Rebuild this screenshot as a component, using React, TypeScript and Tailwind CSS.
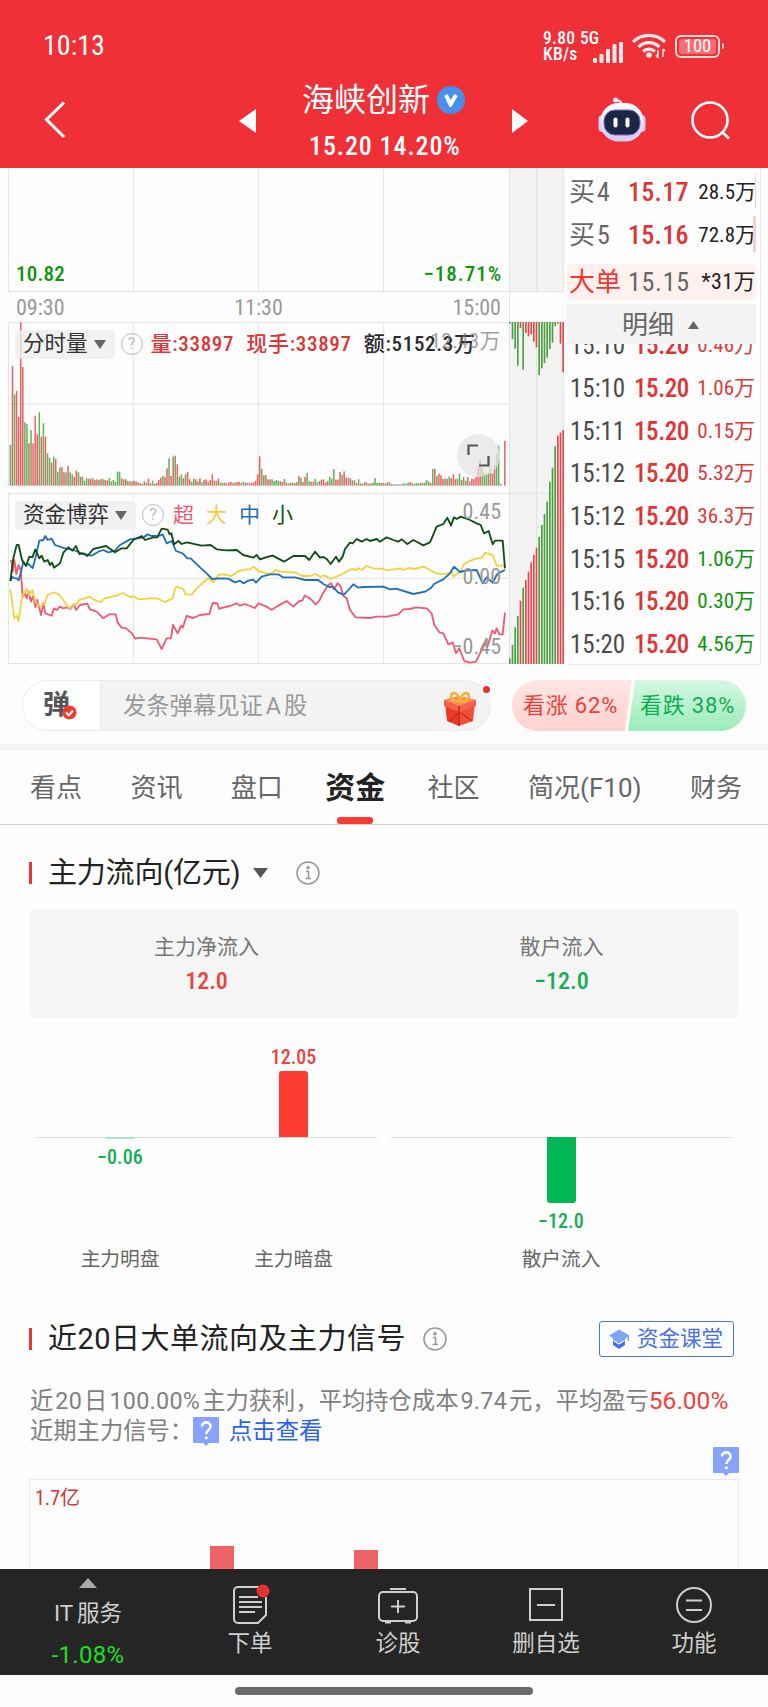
import type { ReactNode } from "react"

const RED = "#e5484a"
const GREEN = "#4aa340"

// minute volume, one entry per bar: height in 1/3 px, then r/g/n for the colour
const volume =
  "122g 359r 274g 284r 206r 490r 356r 190g 185g 127r 167g 127r 210r 154r 220g 147r 187g 147r 97g 84g 69r 87g 80r 42g 55g 55r 40r 40g 59r 40g 34g 26r 45r 40g 27r 27g 15g 22g 21r 21r 22g 17r 19r 17g 20r 19g 17r 15r 23g 13g 17g 12g 42g 42g 22r 19g 19r 14g 13r 13g 15r 13r 10g 7r 5g 13r 9g 21r 7g 15g 6r 8r 17r 24r 30g 26r 52r 82g 29r 87r 90g 64r 27g 34g 22r 34g 41r 19r 12g 21g 19r 13g 22r 10g 17r 19r 12g 17r 34r 15r 15g 22r 9g 9g 9r 7n 9r 11r 8g 9r 11r 12r 8n 12g 9r 9n 9n 9r 9r 15r 34r 88r 51g 31r 32g 19r 19r 19g 14g 17g 15g 13r 11r 20g 9r 7g 9r 9g 8r 11g 29r 24g 11r 26r 38g 14g 11r 12r 20g 11n 14g 18r 19r 9r 14r 27g 21g 50g 18r 18r 41r 33g 43r 24r 24n 22r 16g 16r 8g 19g 7r 6g 11r 9n 6g 7r 9g 23g 8g 9g 8g 8r 7g 10r 10r 5g 4r 4g 4n 4g 5n 7g 6n 9g 11r 7r 5g 8g 7g 9g 8g 9r 17g 13g 9r 50g 50r 29g 36r 31r 20r 22g 20r 27g 22r 34r 19r 21g 36g 17r 26g 15g 26r 13n 21r 20r 26r 57r 79r 52g 39g 35g 39r 57g 37r 62r 95g 120g 6n 0n 134r"
    .split(" ")
    .map((v) => ({ h: parseInt(v), c: v.slice(-1) }))

const chipTop =
  "5g 51g 80g 131g 18r 143g 33r 43r 37r 59r 76r 159g 139g 123g 107g 81g 62g 13g 5r 65r 151r".split(" ")
const chipBottom =
  "17g 57g 110g 144g 190r 229g 252r 277r 305r 327r 349r 381g 417g 450g 487g 547g 589g 653g 685r 694r 702r".split(" ")

const lines = [
  {
    color: "#ee5a72",
    points:
      "31,210 35,215 38,245 43,210 49,252 56,225 62,240 68,320 75,310 80,325 86,305 93,335 100,317 106,352 112,330 123,375 130,340 136,370 155,377 162,355 170,360 180,350 190,355 200,352 210,357 222,343 228,360 240,345 262,341 270,358 290,365 310,385 328,373 347,373 353,398 365,413 378,415 396,430 405,446 420,443 470,448 485,477 500,445 513,445 519,405 533,430 543,407 548,413 560,378 580,384 600,375 628,372 638,339 652,340 657,356 690,348 710,340 720,347 735,342 765,354 775,340 800,350 815,359 835,347 860,333 880,350 898,333 907,332 914,317 930,325 947,343 958,332 970,308 985,285 993,280 1002,298 1013,280 1021,287 1030,318 1040,325 1050,360 1067,382 1110,384 1130,380 1160,380 1195,373 1210,358 1230,357 1248,352 1280,355 1295,370 1303,405 1318,427 1330,430 1345,463 1358,457 1368,490 1378,475 1393,513 1410,518 1428,515 1440,490 1455,460 1462,470 1477,422 1485,430 1490,415 1498,433 1508,433 1515,368",
  },
  {
    color: "#f4d23f",
    points:
      "31,297 43,385 50,378 56,393 66,320 80,297 88,315 97,300 106,335 120,350 133,342 143,315 162,307 175,312 190,330 207,355 220,345 232,340 238,330 270,320 280,328 300,336 315,325 335,320 350,317 368,309 390,321 400,319 415,328 450,325 470,325 495,336 518,325 525,295 532,290 550,297 556,313 575,314 590,295 625,264 640,277 655,255 670,253 695,258 715,243 740,238 750,238 761,230 775,243 800,250 815,250 828,240 840,245 890,248 905,258 930,258 947,252 960,260 975,257 993,267 1020,255 1055,237 1070,240 1075,234 1085,240 1100,228 1120,235 1150,237 1162,241 1200,235 1210,240 1225,234 1242,237 1270,230 1290,240 1310,250 1335,253 1355,245 1360,260 1385,240 1392,222 1420,208 1445,203 1455,188 1478,195 1490,227 1513,227",
  },
  {
    color: "#2070b8",
    points:
      "31,273 37,260 43,265 50,265 56,271 62,250 70,215 78,225 85,222 98,234 106,205 118,152 130,150 136,138 143,150 155,146 165,165 195,175 210,177 228,183 250,192 275,197 295,185 310,180 325,187 345,182 360,165 390,148 410,145 430,143 443,133 455,138 480,137 488,133 500,160 515,153 528,183 548,190 562,205 572,205 600,232 620,250 636,267 655,265 685,266 705,277 720,272 730,280 745,272 760,269 768,278 785,260 810,253 835,253 848,262 885,262 915,270 955,270 970,282 988,291 998,290 1015,308 1032,314 1045,300 1060,283 1075,293 1090,291 1150,290 1170,298 1188,296 1240,312 1275,305 1292,295 1302,282 1330,268 1350,250 1362,230 1380,246 1400,241 1430,240 1448,280 1460,262 1478,278 1490,255 1500,247 1515,240",
  },
  {
    color: "#0f4d12",
    points:
      "31,273 40,205 50,165 56,165 66,210 78,228 88,200 97,202 106,178 118,205 125,197 133,215 143,210 150,225 156,218 162,233 180,220 190,188 205,172 217,182 228,168 238,192 250,190 262,198 280,177 300,172 318,168 345,187 365,175 380,175 400,150 425,138 435,150 460,142 472,142 485,116 503,119 509,133 514,130 522,163 535,153 545,162 560,157 605,167 632,165 650,178 680,181 710,180 730,195 760,203 770,195 780,208 805,200 818,197 852,215 880,198 915,198 928,210 945,185 960,203 970,201 980,207 992,222 1008,200 1017,215 1028,200 1035,177 1050,158 1058,160 1070,147 1085,155 1100,147 1110,153 1130,147 1140,155 1160,142 1180,150 1195,155 1205,148 1222,162 1240,150 1270,166 1290,157 1310,110 1330,102 1342,83 1353,107 1362,82 1370,87 1382,80 1410,90 1430,100 1442,105 1452,130 1466,123 1478,163 1485,152 1508,152 1515,235",
  },
]

const trades = [
  { time: "15:10", amount: "0.46万", up: true },
  { time: "15:10", amount: "1.06万", up: true },
  { time: "15:11", amount: "0.15万", up: true },
  { time: "15:12", amount: "5.32万", up: true },
  { time: "15:12", amount: "36.3万", up: true },
  { time: "15:15", amount: "1.06万", up: false },
  { time: "15:16", amount: "0.30万", up: false },
  { time: "15:20", amount: "4.56万", up: false },
]

const tabs = ["看点", "资讯", "盘口", "资金", "社区", "简况(F10)", "财务"]

const num = "font-['Roboto_Condensed','Roboto','Noto_Sans_CJK_SC',sans-serif]"

function StatusBar() {
  return (
    <div className="flex h-[74px] items-center pt-[18px] pl-[43px]">
      <span className={`${num} w-[500px] text-[28px] leading-none`}>10:13</span>
      <div className={`${num} flex w-[34px] flex-col text-[17.500px] leading-[16px] font-medium tracking-[0.3px]`}>
        <span>9.80</span>
        <span>KB/s</span>
      </div>
      <div className="relative ml-[3px] h-[38px] w-[46px]">
        <span className={`${num} absolute top-[3px] left-0 text-[17.500px] leading-[16px] font-medium`}>5G</span>
        <svg className="absolute top-[1px] left-[12px]" width="33" height="36" fill="#ffe9e9">
          <rect x="1" y="30" width="4" height="5" rx="1" />
          <rect x="7.500" y="26" width="4" height="9" rx="1" />
          <rect x="14" y="21" width="4" height="14" rx="1" />
          <rect x="20.500" y="16" width="4" height="19" rx="1" />
          <rect x="27" y="14" width="4" height="21" rx="1" />
        </svg>
      </div>
      <svg className="ml-[6px]" width="34" height="26" fill="none" stroke="#ffe9e9" strokeWidth="3.200">
        <path d="M1 9a22.500 22.500 0 0 1 32 0M6.500 14a15 15 0 0 1 21 0M11 18.500a9 9 0 0 1 12 0" />
        <circle cx="17" cy="22" r="1.800" fill="#ffe9e9" stroke="#ffe9e9" strokeWidth="2" />
        <path d="M26 17v8M31 16v8M24 22l2 3M33 18l-2-2" strokeWidth="1.500" />
      </svg>
      <div className="ml-[9px] flex h-[23px] w-[45px] items-center justify-center rounded-[6px] border-2 border-[#ffdada] p-[2px]">
        <span className={`${num} flex h-full w-full items-center justify-center rounded-[3px] bg-white/30 text-[18.500px] leading-none`}>
          100
        </span>
      </div>
      <div className="ml-[2px] h-[6px] w-[2px] rounded-r bg-[#ffdada]" />
    </div>
  )
}

function Robot() {
  return (
    <svg width="48" height="46" viewBox="0 0 48 46">
      <defs>
        <linearGradient id="head" x1="0" y1="0" x2="0" y2="1">
          <stop offset="0" stopColor="#ffffff" />
          <stop offset="1" stopColor="#cfccf2" />
        </linearGradient>
      </defs>
      <path d="M24 9c0-4-2-5-6-6" fill="none" stroke="#e9dff2" strokeWidth="2.500" />
      <circle cx="17.500" cy="3" r="2.500" fill="#efe4f4" />
      <rect x="0.500" y="18" width="8" height="17" rx="4" fill="#cfcdf0" />
      <rect x="39.500" y="18" width="8" height="17" rx="4" fill="#cfcdf0" />
      <rect x="2.500" y="6" width="43" height="38.500" rx="18" fill="url(#head)" />
      <rect x="6" y="13" width="36" height="25" rx="11" fill="#1b2645" stroke="#7a6ad6" strokeWidth="1" />
      <rect x="15.500" y="20.500" width="4" height="10" rx="2" fill="#fff" />
      <rect x="27.500" y="20.500" width="4" height="10" rx="2" fill="#fff" />
    </svg>
  )
}

function Header() {
  return (
    <header className="h-[168px] bg-[#ef3037] text-white">
      <StatusBar />
      <div className="flex h-[94px] pl-[44px]">
        <svg className="mt-[27px]" width="22" height="38" fill="none" stroke="#fff" strokeWidth="3">
          <path d="M20 1.500L2.500 18.500 20 36" />
        </svg>
        <svg className="mt-[35px] ml-[173px]" width="17" height="24" fill="#fff">
          <path d="M17 0v24L0 12z" />
        </svg>
        <div className="ml-[46px] w-[166px]">
          <div className="mt-[9px] flex h-[34px] items-center">
            <span className="text-[32px] leading-[34px] whitespace-nowrap">海峡创新</span>
            <span className="ml-[7px] flex size-[28px] shrink-0 items-center justify-center rounded-full bg-[#468fec]">
              <svg width="14" height="13" fill="none" stroke="#fff" strokeWidth="4">
                <path d="M2 1l4.500 9.500L12 1" />
              </svg>
            </span>
          </div>
          <div className={`${num} mt-[14px] ml-[7px] text-[26px] leading-[30px] font-medium tracking-[0.9px] whitespace-nowrap`}>
            15.20 14.20%
          </div>
        </div>
        <svg className="mt-[35px] ml-[44px]" width="17" height="24" fill="#fff">
          <path d="M0 0v24l16-12z" />
        </svg>
        <div className="mt-[23px] ml-[69px]">
          <Robot />
        </div>
        <svg className="mt-[26px] ml-[44px]" width="42" height="42" fill="none" stroke="#fff" strokeWidth="2.600">
          <circle cx="20" cy="20" r="17.500" />
          <path d="M32 32l7 6.500" />
        </svg>
      </div>
    </header>
  )
}

function Selector({ children }: { children: ReactNode }) {
  return (
    <div className="flex h-[29px] items-center rounded-[4px] bg-[#eeeeee]/80 pr-[9px] pl-[8px] text-[21.500px] leading-[30px] text-[#333]">
      <span>{children}</span>
      <svg className="ml-[6px]" width="12" height="9" fill="#666">
        <path d="M0 0h12l-6 9z" />
      </svg>
    </div>
  )
}

function Help() {
  return (
    <span className="ml-[6px] flex size-[22px] items-center justify-center rounded-full border-[1.500px] border-[#bdbdbd] text-[16px] leading-none text-[#bdbdbd]">
      ?
    </span>
  )
}

function Charts() {
  return (
    <div className="w-[501px] shrink-0 text-[21px]">
      {/* bottom of the price chart */}
      <div className="relative h-[124px]">
        <svg width="501" height="124" stroke="#e4e4e4">
          <path d="M.5 0V123.500H501M125.500 0V124M250.500 0V124M375.500 0V124" fill="none" />
        </svg>
        <div className={`${num} absolute inset-x-0 bottom-[7px] flex justify-between pr-[7px] pl-[8px] leading-[22px] font-medium text-[#0a960a]`}>
          <span className="tracking-[0.2px]">10.82</span>
          <span className="tracking-[1px]">−18.71%</span>
        </div>
      </div>
      <div className={`${num} flex h-[30px] items-center justify-between pt-[2px] pr-[8px] pl-[8px] text-[22px] leading-none text-[#999]`}>
        <span>09:30</span>
        <span>11:30</span>
        <span>15:00</span>
      </div>

      {/* volume */}
      <div className="relative h-[165px]">
        <svg width="501" height="165" viewBox="24 6 1503 495">
          <path d="M25.500 501V8H1527M25.500 252H1527M400 8V497M775 8V497M1151 8V497" fill="none" stroke="#e4e4e4" strokeWidth="3" />
          {volume.map((v, i) => (
            <rect
              key={i}
              x={29 + i * 6.18}
              y={497 - v.h}
              width="4.600"
              height={v.h}
              fill={v.c === "r" ? RED : v.c === "g" ? GREEN : "#888"}
              opacity="0.850"
            />
          ))}
        </svg>
        <div className="absolute top-[7px] left-[7px] flex items-center whitespace-nowrap">
          <Selector>分时量</Selector>
          <Help />
          <div className={`${num} ml-[8px] flex gap-[12px] pt-px leading-[29px] font-medium tracking-[0.700px] text-[#dc3535]`}>
            <span>量:33897</span>
            <span>现手:33897</span>
            <span className="text-[#2b2b2b]">额:5152.3万</span>
          </div>
        </div>
        <span className={`${num} absolute top-[6px] right-[8px] leading-[26px] tracking-[0.4px] text-[#777]/70`}>12.43万</span>
        <div className="absolute top-[112px] left-[449px] flex size-[43px] items-center justify-center rounded-full bg-[#e4e4e4]/75">
          <svg width="23" height="23" fill="none" stroke="#555" strokeWidth="2.200">
            <path d="M1.500 11V1.500H11M12 21.500h9.500V12" />
          </svg>
        </div>
      </div>

      {/* capital game lines */}
      <div className="relative mt-[6px] h-[171px]">
        <svg width="501" height="171" viewBox="24 9 1503 513">
          <path d="M25.500 10.500H1527M25.500 9V520.500H1527M25.500 265H1527M400 9V520M775 9V520M1151 9V520" fill="none" stroke="#e4e4e4" strokeWidth="3" />
        </svg>
        <svg className="absolute inset-0" width="501" height="171" viewBox="24 9 1503 513" fill="none">
          {lines.map((l) => (
            <polyline key={l.color} points={l.points} stroke={l.color} strokeWidth="5.500" strokeLinejoin="round" />
          ))}
        </svg>
        <div className={`${num} absolute inset-y-0 right-[8px] w-[60px] text-right text-[22px] leading-[22px] text-[#999]`}>
          <div className="mt-[8px]">0.45</div>
          <div className="mt-[43px]">0.00</div>
          <div className="mt-[48px]">−0.45</div>
        </div>
        <div className="absolute top-[7px] left-[7px] flex items-center whitespace-nowrap">
          <Selector>资金博弈</Selector>
          <Help />
          <div className="ml-[9px] flex gap-[12px] text-[21px] leading-[30px]">
            <span className="text-[#ee5a72]">超</span>
            <span className="text-[#f4cf35]">大</span>
            <span className="text-[#2070b8]">中</span>
            <span className="text-[#0f4d12]">小</span>
          </div>
        </div>
      </div>
    </div>
  )
}

function ChipPanel() {
  return (
    <svg className="shrink-0" width="55" height="496" viewBox="0 0 165 1488">
      <rect width="165" height="371" fill="#f3f3f3" />
      <rect y="462" width="165" height="1026" fill="#f3f3f3" />
      <path d="M1.500 0V1488M83 0V371M83 462V1488M163 0V371M163 462V1488M0 371H165M0 462H165M0 976H165" fill="none" stroke="#e2e2e2" strokeWidth="3" />
      {chipTop.map((v, i) => (
        <rect key={i} x={i * 8} y="462" width="5" height={parseInt(v)} fill={v.endsWith("r") ? RED : GREEN} />
      ))}
      {chipBottom.map((v, i) => (
        <rect key={i} x={i * 8} y={1488 - parseInt(v)} width="5" height={parseInt(v)} fill={v.endsWith("r") ? RED : GREEN} />
      ))}
    </svg>
  )
}

function OrderBook() {
  return (
    <div className={`${num} ml-[3px] h-[497px] w-[194px] shrink-0 overflow-hidden border-r border-b border-[#ececec] pr-[4px]`}>
      {[
        ["买4", "15.17", "28.5万", "w-px"],
        ["买5", "15.16", "72.8万", "w-[3px]"],
      ].map(([side, price, amount, bar]) => (
        <div key={side} className="relative flex h-[43px] items-center pt-[5px] pl-[2px] leading-[38px] whitespace-nowrap">
          <span className="w-[59px] text-[26px] tracking-[2px] text-[#666]">{side}</span>
          <span className="w-[70px] text-[26px] font-medium tracking-[0.3px] text-[#e03434]">{price}</span>
          <span className="flex-1 text-right text-[21px] text-[#222]">{amount}</span>
          <span className={`absolute top-[5px] right-0 h-[36px] bg-[#f9cfd1] ${bar}`} />
        </div>
      ))}
      <div className="mt-[10px] flex h-[36px] items-center rounded-[6px] bg-[#fff1f0] pl-[2px] leading-[36px] whitespace-nowrap">
        <span className="w-[59px] text-[26px] text-[#f0382f]">大单</span>
        <span className="w-[66px] text-[26px] tracking-[0.7px] text-[#666]">15.15</span>
        <span className="flex-1 text-right text-[22px] tracking-[0.4px] text-[#222]">*31万</span>
      </div>
      <div className="mt-[4px] flex h-[40px] items-center justify-center bg-[#f3f3f3] pt-[2px] pr-[2px] text-[26px] leading-[38px] text-[#666]">
        明细
        <svg className="ml-[14px]" width="11" height="8" fill="#666">
          <path d="M5.500 0L11 8H0z" />
        </svg>
      </div>
      <div className="flex h-[322px] flex-col justify-end overflow-hidden">
        {trades.map((t, i) => (
          <div key={i} className="flex h-[42.700px] shrink-0 items-center pl-[3px] leading-[43px] whitespace-nowrap">
            <span className="w-[64px] text-[25px] text-[#4a4a4a]">{t.time}</span>
            <span className="w-[60px] text-[25px] font-medium tracking-[-0.4px] text-[#e03434]">15.20</span>
            <span className={`flex-1 pr-px text-right text-[21px] ${t.up ? "text-[#d93a3a]" : "text-[#0a960a]"}`}>
              {t.amount}
            </span>
          </div>
        ))}
      </div>
    </div>
  )
}

function Gift() {
  return (
    <svg width="34" height="36" viewBox="0 0 34 36">
      <path d="M2 12l14 5v18L4 30z" fill="#e8392b" />
      <path d="M32 12l-16 5v18l14-5z" fill="#f0503a" />
      <path d="M1 9l15-4 17 4v6l-17 6L1 15z" fill="#f4604a" />
      <path d="M1 9l15-4 17 4-17 6z" fill="#fa8a63" />
      <path d="M16 15v20" stroke="#c5261d" strokeWidth="1.500" />
      <path d="M16 22L6 31M18 22l11 8" stroke="#cf2c21" strokeWidth="1.500" />
      <path d="M17 10C7 12 6 2 11 2c3 0 6 5 6 8zM17 10c10 2 11-8 6-8-3 0-6 5-6 8z" fill="none" stroke="#f5b32d" strokeWidth="2.600" />
    </svg>
  )
}

function DanmuBar() {
  return (
    <div className="flex h-[80px] items-start pt-[16px] pl-[22px]">
      <div className="relative flex h-[51px] w-[469px] overflow-visible rounded-full border border-[#ececec] bg-[#f3f3f3]">
        <div className="relative w-[78px] rounded-l-full border-r border-[#ececec] bg-white pl-[20px] text-[27px] leading-[49px] font-bold text-[#555]">
          弹
          <svg className="absolute top-[24px] left-[39px]" width="15" height="15">
            <circle cx="7.500" cy="7.500" r="7" fill="#ee3b30" />
            <path d="M4 7.500l2.800 2.800L11 5.500" fill="none" stroke="#fff" strokeWidth="2" />
          </svg>
        </div>
        <span className="pl-[22px] text-[23.300px] leading-[50px] text-[#999]">
          发条弹幕见证<span className="mx-[3px]">A</span>股
        </span>
        <div className="absolute top-[10px] right-[13px]">
          <Gift />
        </div>
        <span className="absolute top-[5px] right-0 size-[7px] rounded-full bg-[#e8302e]" />
      </div>
      <div className="ml-[21px] flex h-[51px] text-[22px] leading-[52px] tracking-[0.800px] whitespace-nowrap">
        <div className="w-[120px] rounded-l-full bg-linear-to-b from-[#ffe6e4] to-[#ffd2cf] pl-[11px] text-[#ee4038] [clip-path:polygon(0_0,100%_0,94%_100%,0_100%)]">
          看涨 62%
        </div>
        <div className="-ml-[4px] w-[118px] rounded-r-full bg-linear-to-b from-[#d5f7e3] to-[#9aebba] pl-[12px] text-[#0fae52] [clip-path:polygon(6%_0,100%_0,100%_100%,0_100%)]">
          看跌 38%
        </div>
      </div>
    </div>
  )
}

function Tabs() {
  return (
    <nav className="flex h-[74px] justify-between border-b border-[#d5d5d5] pr-[26px] pl-[30px] text-[26px] leading-[74px] text-[#666]">
      {tabs.map((t) =>
        t === "资金" ? (
          <span key={t} className="relative -mx-[6px] text-[30px] font-bold text-[#222]">
            {t}
            <span className="absolute bottom-0 left-1/2 h-[7px] w-[36px] -translate-x-1/2 rounded-[3px] bg-[#f73c32]" />
          </span>
        ) : (
          <span key={t}>{t}</span>
        ),
      )}
    </nav>
  )
}

function Info() {
  return (
    <svg width="24" height="24" fill="none" stroke="#999" strokeWidth="1.600">
      <circle cx="12" cy="12" r="11" />
      <path d="M10 10.500h2.500V17M9.500 17.500h5.500" />
      <circle cx="12" cy="6.800" r="1" fill="#999" />
    </svg>
  )
}

function Bubble() {
  return (
    <svg width="26" height="29">
      <path d="M1 0h24a1 1 0 0 1 1 1v24a1 1 0 0 1-1 1h-9l-3 3-3-3H1a1 1 0 0 1-1-1V1a1 1 0 0 1 1-1z" fill="#88a3ff" />
      <path d="M9 9.500c0-5.500 8.500-5.500 8.500 0 0 3.500-4.200 3.500-4.200 7.500" fill="none" stroke="#fff" strokeWidth="2.600" />
      <circle cx="13.300" cy="20.800" r="1.600" fill="#fff" />
    </svg>
  )
}

function FlowSection() {
  return (
    <section className="h-[465px]">
      <div className="flex h-[84px] items-center pt-[12px] pl-[29px]">
        <span className="h-[22px] w-[3px] bg-[#ee3530]" />
        <h2 className="ml-[16px] text-[29px] leading-[40px] tracking-[-0.2px] text-[#222]">主力流向(亿元)</h2>
        <svg className="ml-[13px]" width="15" height="10" fill="#555">
          <path d="M0 0h15L7.500 10z" />
        </svg>
        <span className="ml-[28px]">
          <Info />
        </span>
      </div>
      <div className="mx-[29px] grid h-[109px] grid-cols-2 rounded-[8px] bg-[#f5f5f5] pt-[24px] text-center text-[21px] leading-[28px] text-[#777]">
        <div>
          主力净流入
          <div className={`${num} mt-[6px] text-[24px] font-medium text-[#ef4138]`}>12.0</div>
        </div>
        <div>
          散户流入
          <div className={`${num} mt-[6px] text-[24px] font-medium text-[#12ad54]`}>−12.0</div>
        </div>
      </div>
      <div className="flex h-[272px] pl-[36px] text-center text-[19.700px] text-[#666]">
        <div className="relative grid w-[341px] shrink-0 grid-cols-[168px_179px]">
          <span className="absolute top-[119px] h-px w-full bg-[#dcdcdc]" />
          <div className="flex flex-col items-center">
            <span className="z-10 mt-[119px] h-[2px] w-[30px] bg-[#b5dfc8]" />
            <span className={`${num} mt-[6px] text-[20px] leading-[24px] font-medium text-[#12ad54]`}>−0.06</span>
            <span className="mt-[76px] leading-[29px]">主力明盘</span>
          </div>
          <div className="flex flex-col items-center">
            <span className={`${num} mt-[27px] text-[20px] leading-[24px] font-medium text-[#ef4138]`}>12.05</span>
            <span className="mt-[2px] h-[66px] w-[29px] rounded-t-[3px] bg-[#fa3c32]" />
            <span className="mt-[108px] leading-[29px]">主力暗盘</span>
          </div>
        </div>
        <div className="relative ml-[14px] flex w-[340px] flex-col items-center">
          <span className="absolute top-[119px] h-px w-full bg-[#dcdcdc]" />
          <span className="z-10 mt-[119px] h-[66px] w-[29px] rounded-b-[3px] bg-[#00b853]" />
          <span className={`${num} mt-[6px] text-[20px] leading-[24px] font-medium text-[#12ad54]`}>−12.0</span>
          <span className="mt-[12px] leading-[29px]">散户流入</span>
        </div>
      </div>
    </section>
  )
}

function SignalSection() {
  return (
    <section className="h-[279px]">
      <div className="flex h-[98px] items-center pl-[29px]">
        <span className="h-[22px] w-[3px] bg-[#ee3530]" />
        <h2 className="ml-[16px] text-[29px] leading-[40px] tracking-[0.500px] text-[#222]">近20日大单流向及主力信号</h2>
        <span className="ml-[17px]">
          <Info />
        </span>
        <div className="mr-[34px] ml-auto flex h-[36px] items-center rounded-[3px] border-[1.500px] border-[#4a73dd] pr-[10px] pl-[9px] text-[21.500px] leading-[32px] text-[#4a73e0]">
          <svg className="mr-[8px]" width="20" height="20">
            <path d="M4 9v7l6 4 6-4V9z" fill="#3f6fec" />
            <path d="M10 .5L20 6v6h-1.500V8L10 14 0 6.500z" fill="#7fa4fa" />
            <path d="M4 11l6 4 6-4" fill="none" stroke="#fff" strokeWidth="1.200" />
          </svg>
          资金课堂
        </div>
      </div>
      <div className="h-[91px] pl-[30px] text-[23.300px] leading-[31px] text-[#808080]">
        <p className="relative -top-[3px] whitespace-nowrap">
          近<span className="mx-[2px] tracking-[0.3px]">20</span>日<span className="mx-[2px] tracking-[0.3px]">100.00%</span>
          主力获利，平均持仓成本<span className="mx-[2px] tracking-[0.3px]">9.74</span>元，平均盈亏
          <span className="text-[24.500px] text-[#f04138]">56.00%</span>
        </p>
        <div className="-mt-[4px] flex items-center">
          近期主力信号：
          <Bubble />
          <span className="ml-[10px] text-[#2b62ee]">点击查看</span>
        </div>
        <div className="flex justify-end pr-[29px]">
          <Bubble />
        </div>
      </div>
      <div className="mx-[29px] h-[90px] border border-b-0 border-[#ebebeb]">
        <div className={`${num} pt-[5px] pl-[5px] text-[20px] leading-[26px] text-[#d63333]`}>1.7亿</div>
        <div className="flex h-[58px] items-end pl-[180px]">
          <span className="h-[23px] w-[24px] bg-[#ef6366]" />
          <span className="ml-[120px] h-[19px] w-[24px] bg-[#ef6366]" />
        </div>
      </div>
    </section>
  )
}

function NavItem({ label, children }: { label: string; children: ReactNode }) {
  return (
    <div className="flex w-[148px] flex-col items-center pt-[15px]">
      {children}
      <span className="mt-[4px] text-[22.500px] leading-[30px]">{label}</span>
    </div>
  )
}

function BottomNav() {
  return (
    <footer>
      <div className="flex h-[106px] bg-[#252525] text-[#cfcfcf]">
        <div className="flex w-[176px] flex-col items-center pt-[9px]">
          <svg width="18" height="10" fill="#aaa">
            <path d="M9 0l9 10H0z" />
          </svg>
          <span className="mt-[10px] text-[22.500px] leading-[30px]">
            IT<span className="ml-[4px]">服务</span>
          </span>
          <span className="mt-[13px] text-[24px] leading-[28px] tracking-[0.3px] text-[#1ee01e]">-1.08%</span>
        </div>
        <NavItem label="下单">
          <svg width="40" height="40" fill="none" stroke="#cfcfcf" strokeWidth="2" className="overflow-visible">
            <path d="M30 3H8a4 4 0 0 0-4 4v28a4 4 0 0 0 4 4h20l8-8V13" />
            <path d="M9 13h19M9 18h23M9 23h23M9 28h16" />
            <circle cx="33" cy="7" r="6.500" fill="#ea2f30" stroke="none" />
          </svg>
        </NavItem>
        <NavItem label="诊股">
          <svg width="40" height="40" fill="none" stroke="#cfcfcf" strokeWidth="2">
            <rect x="1" y="8" width="38" height="29" rx="4" />
            <path d="M12 5h16M20 16v13M13 22.500h14M7 38.500h6M27 38.500h6" />
          </svg>
        </NavItem>
        <NavItem label="删自选">
          <svg width="40" height="40" fill="none" stroke="#cfcfcf" strokeWidth="2">
            <rect x="4" y="5" width="32" height="31" />
            <path d="M11 21h18" />
          </svg>
        </NavItem>
        <NavItem label="功能">
          <svg width="40" height="40" fill="none" stroke="#cfcfcf" strokeWidth="2">
            <circle cx="20" cy="21" r="17" />
            <path d="M12 16.500h16M12 26h16" />
          </svg>
        </NavItem>
      </div>
      <div className="flex h-[32px] justify-center pt-[12px]">
        <span className="h-[8px] w-[298px] rounded-full bg-[#6b6b6b]" />
      </div>
    </footer>
  )
}

export default function App() {
  return (
    <div className="h-[1707px] w-[768px] overflow-hidden bg-[#fdfdfd] font-['Roboto','Noto_Sans_CJK_SC',sans-serif]">
      <Header />
      <div className="flex h-[496px] pl-[8px]">
        <Charts />
        <ChipPanel />
        <OrderBook />
      </div>
      <DanmuBar />
      <div className="h-[7px] bg-[#f3f3f3]" />
      <Tabs />
      <FlowSection />
      <SignalSection />
      <BottomNav />
    </div>
  )
}
